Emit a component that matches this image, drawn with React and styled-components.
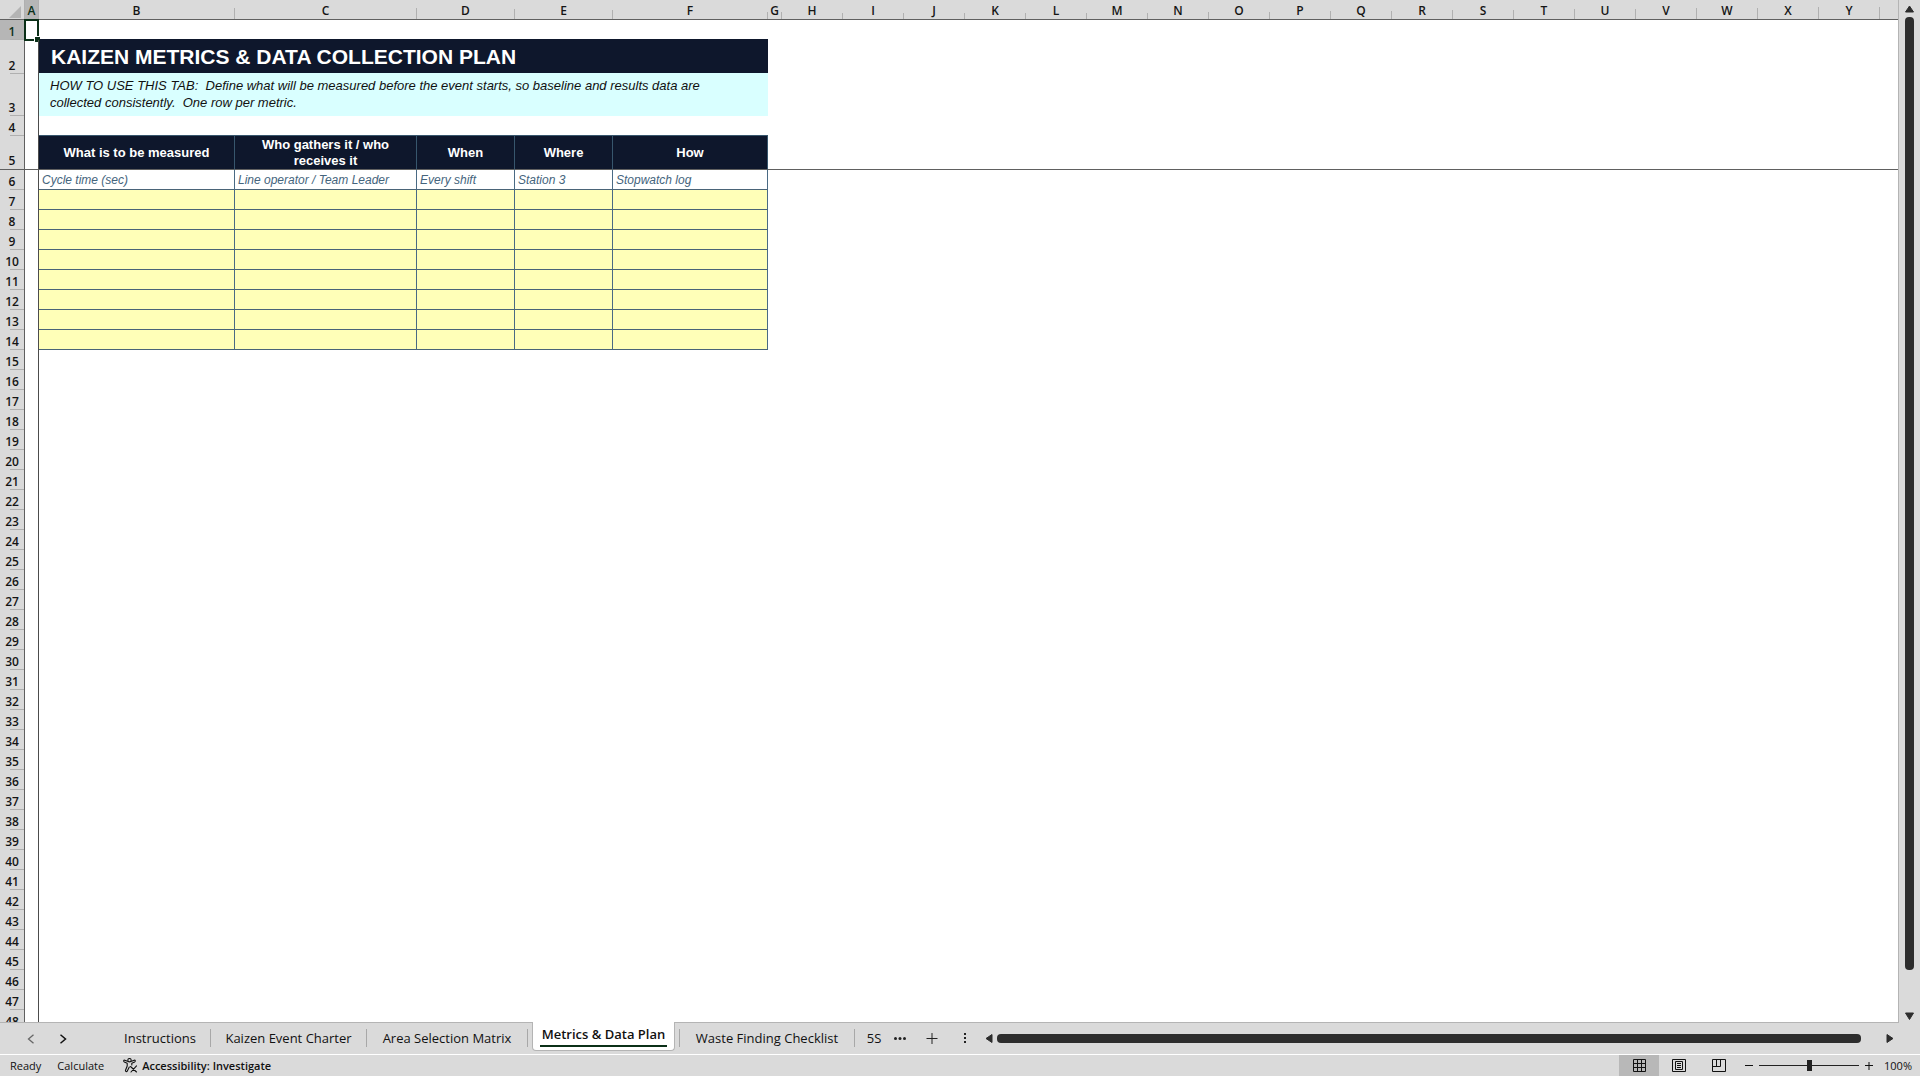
import { useState } from 'react'
import styled, { createGlobalStyle } from 'styled-components'

const GlobalStyle = createGlobalStyle`
    * {
        box-sizing: border-box;
    }

    body {
        margin: 0;
        background-color: #dadada;
        font-family: 'Open Sans', 'Noto Sans', sans-serif;
        color: #111;
    }

    button {
        font: inherit;
        color: inherit;
        background: none;
        border: none;
        padding: 0;
    }
`

const Page = styled.div`
    height: 100vh;
    display: flex;
    flex-direction: column;
    overflow: hidden;
`

const Workspace = styled.main`
    flex: 1;
    min-height: 0;
    display: flex;
`

const SheetArea = styled.div`
    flex: 1;
    min-width: 0;
    overflow: hidden;
    background-color: #fff;
    border-right: 1px solid #b4b4b4;
    border-bottom: 1px solid #b4b4b4;
`

const Sheet = styled.table`
    width: 100%;
    table-layout: fixed;
    border-collapse: separate;
    border-spacing: 0;
    font-family: 'Liberation Sans', Arial, sans-serif;
    font-size: 13px;
`

const Col = styled.col`
    width: ${(props) => props.$width}px;
`

const Row = styled.tr`
    height: ${(props) => props.$height}px;
`

const HeaderCell = styled.th`
    padding: 0;
    background-color: ${(props) => (props.$selected ? '#b6b6b6' : '#dadada')};
    color: ${(props) => (props.$selected ? '#0b3018' : '#151515')};
    font-family: 'Open Sans', 'Noto Sans', sans-serif;
    font-size: 12px;
    font-weight: 600;
    line-height: 17px;
    text-align: center;
    background-repeat: no-repeat;
    background-position: right bottom;
`

const ColumnHeader = styled(HeaderCell)`
    border-bottom: 1px solid #606060;
    padding: 2px 1px 0 0;
    background-image: linear-gradient(#b0b0b0, #b0b0b0);
    background-size: 1px ${(props) => props.$tick}px;
`

const RowHeader = styled(HeaderCell)`
    vertical-align: bottom;
    padding-top: 2px;
    border-right: 1px solid #606060;
    border-bottom: ${(props) => (props.$frozen ? '1px solid #606060' : 'none')};
    background-image: linear-gradient(#b0b0b0, #b0b0b0);
    background-size: 14px ${(props) => (props.$frozen ? 0 : 1)}px;
`

const Corner = styled(HeaderCell)`
    border-right: 1px solid #b0b0b0;
    border-bottom: 1px solid #606060;

    svg {
        display: block;
        margin: 4px 0 0 9px;
    }
`

const Cell = styled.td`
    padding: 0;
    border-bottom: ${(props) => (props.$frozen ? '1px solid #606060' : 'none')};
`

const FrozenCell = styled(Cell)`
    position: relative;
    border-right: 1px solid #4c4c4c;
`

const Selection = styled.span`
    position: absolute;
    top: -1px;
    left: -1px;
    right: -1px;
    bottom: -1px;
    border: 2px solid #0b3018;

    &::after {
        content: '';
        position: absolute;
        right: -3px;
        bottom: -3px;
        width: 5px;
        height: 5px;
        background-color: #0b3018;
        border-top: 1px solid #fff;
        border-left: 1px solid #fff;
    }
`

const Title = styled.td`
    padding: 0 12px;
    background-color: #0e172c;
    border-bottom: 1px solid #d9ffff;
    box-shadow: 0 -1px #0e172c;
    color: #fff;
    font-size: 21px;
    font-weight: bold;
    line-height: 24px;
`

const Note = styled.td`
    padding: 3px 11px;
    vertical-align: top;
    background-color: #d9ffff;
    font-size: 13px;
    font-style: italic;
    line-height: 17px;
`

const FieldHeader = styled.th`
    padding: 0 16px;
    background-color: #0e172c;
    border-right: 1px solid #37566d;
    border-bottom: 1px solid #606060;
    box-shadow: 0 -1px #37566d;
    color: #fff;
    font-size: 13px;
    font-weight: bold;
    line-height: 16px;
`

const Field = styled.td`
    padding: 0 3px;
    border-right: 1px solid #4a6a84;
    border-bottom: 1px solid #4a6478;
    background-color: ${(props) => (props.$filled ? '#fff' : '#ffffb8')};
    color: #44647c;
    font-size: 12px;
    font-style: italic;
    line-height: 18px;
    white-space: nowrap;
`

const VerticalBar = styled.div`
    width: 21px;
    padding: 5px 0 3px;
    display: flex;
    flex-direction: column;
    align-items: center;
`

const VerticalTrack = styled.div`
    flex: 1;
    width: 9px;
    margin: 4px 0 42px;
`

const VerticalThumb = styled.div`
    width: 9px;
    height: 100%;
    border-radius: 4px;
    background-color: #2d2d2d;
`

const ArrowButton = styled.button`
    display: flex;
    align-items: center;
    justify-content: center;

    svg {
        display: block;
    }
`

const TabBar = styled.nav`
    height: 32px;
    display: flex;
    border-bottom: 1px solid #fff;
    font-size: 13px;
`

const TabArrows = styled.div`
    width: 110px;
    padding-left: 24px;
    display: flex;
    align-items: center;
    gap: 18px;
`

const NavButton = styled.button`
    width: 14px;
    height: 20px;
    color: ${(props) => (props.disabled ? '#666' : '#111')};
    display: flex;
    align-items: center;
    justify-content: center;
`

const Tab = styled.button`
    width: ${(props) => props.$width}px;
    height: 18px;
    margin-top: 6px;
    white-space: nowrap;
    line-height: 18px;
    border-right: ${(props) => (props.$last ? 'none' : '1px solid #a8a8a8')};
`

const ActiveTab = styled.button`
    height: 29px;
    margin: -1px 4px 0;
    padding: 0 7px 3px;
    width: 143px;
    background-color: #fff;
    border: 1px solid #b4b4b4;
    border-top: none;
    border-radius: 0 0 4px 4px;
    font-weight: 600;
    white-space: nowrap;

    span {
        display: block;
        height: 25px;
        line-height: 24px;
        border-bottom: 2px solid #0b3018;
    }
`

const Divider = styled.span`
    width: 1px;
    height: 18px;
    margin-top: 6px;
    background-color: #a8a8a8;
`

const TabTool = styled.button`
    width: ${(props) => props.$width}px;
    height: 30px;
    display: flex;
    align-items: center;
    justify-content: center;
`

const HorizontalBar = styled.div`
    flex: 1;
    height: 30px;
    padding: 0 26px 0 12px;
    display: flex;
    align-items: center;
`

const HorizontalTrack = styled.div`
    flex: 1;
    margin: 0 25px 0 4px;
`

const HorizontalThumb = styled.div`
    height: 9px;
    border-radius: 4px;
    background-color: #2d2d2d;
`

const StatusBar = styled.footer`
    height: 21px;
    padding: 0 8px 0 10px;
    display: flex;
    align-items: center;
    font-size: 11px;
    white-space: nowrap;
`

const StatusText = styled.span`
    margin-right: 16px;
`

const Accessibility = styled.button`
    display: flex;
    align-items: center;
    gap: 4px;
    margin-left: 3px;
    margin-right: auto;
    font-weight: 600;
`

const ViewButton = styled.button`
    width: 40px;
    height: 21px;
    display: flex;
    align-items: center;
    justify-content: center;
    background-color: ${(props) => (props.$active ? '#b8b8b8' : 'transparent')};
`

const ZoomButton = styled.button`
    width: 20px;
    height: 20px;
    display: flex;
    align-items: center;
    justify-content: center;
`

const ZoomSlider = styled.input`
    appearance: none;
    width: 100px;
    height: 12px;
    margin: 0;
    background: linear-gradient(#222, #222) center / 100% 1px no-repeat;

    &::-webkit-slider-thumb {
        appearance: none;
        width: 5px;
        height: 11px;
        background-color: #222;
    }
`

const ZoomLevel = styled.output`
    width: 33px;
    text-align: right;
`

const columns = [
    { name: 'A', width: 14, tick: 19 },
    { name: 'B', width: 196, tick: 11 },
    { name: 'C', width: 182, tick: 11 },
    { name: 'D', width: 98, tick: 10 },
    { name: 'E', width: 98, tick: 9 },
    { name: 'F', width: 155, tick: 7 },
    { name: 'G', width: 14, tick: 7 },
    ...'HIJKLMNOPQRSTUVWXY'.split('').map((name, i) => ({
        name,
        width: 61,
        tick: i < 5 ? 6 : Math.min(12, 6 + Math.floor((i - 4) / 2)),
    })),
]

const fields = ['What is to be measured', 'Who gathers it / who receives it', 'When', 'Where', 'How']
const sample = ['Cycle time (sec)', 'Line operator / Team Leader', 'Every shift', 'Station 3', 'Stopwatch log']
const emptyRows = Array.from({ length: 8 }, (_, i) => i + 7)
const plainRows = Array.from({ length: 34 }, (_, i) => i + 15)

const Arrow = ({ direction }) => {
    const shapes = {
        up: 'M4.5 1 L8.5 7 H0.5 Z',
        down: 'M0.5 1 H8.5 L4.5 7.5 Z',
        left: 'M7 0.5 V8.5 L1 4.5 Z',
        right: 'M1 0.5 V8.5 L7 4.5 Z',
    }
    const vertical = direction === 'up' || direction === 'down'

    return (
        <svg width={vertical ? 9 : 8} height={vertical ? 8 : 9}>
            <path d={shapes[direction]} fill="#2d2d2d" stroke="#2d2d2d" strokeLinejoin="round" />
        </svg>
    )
}

const SheetRow = ({ number, height = 20, selected, frozen, children }) => (
    <Row $height={height}>
        <RowHeader scope="row" $selected={selected} $frozen={frozen}>{number}</RowHeader>
        <FrozenCell $frozen={frozen}>{selected && <Selection />}</FrozenCell>
        {children}
    </Row>
)

const Grid = () => (
    <Sheet>
        <colgroup>
            <Col $width={25} />
            {columns.map((column) => (
                <Col key={column.name} $width={column.width} />
            ))}
            <col />
        </colgroup>
        <thead>
            <Row $height={20}>
                <Corner>
                    <svg width="12" height="12">
                        <path d="M12 0 V12 H0 Z" fill="#b4b4b4" />
                    </svg>
                </Corner>
                {columns.map((column) => (
                    <ColumnHeader key={column.name} scope="col" $tick={column.tick} $selected={column.name === 'A'}>
                        {column.name}
                    </ColumnHeader>
                ))}
                <ColumnHeader $tick={0} />
            </Row>
        </thead>
        <tbody>
            <SheetRow number={1} selected>
                <Cell colSpan={25} />
            </SheetRow>
            <SheetRow number={2} height={34}>
                <Title colSpan={5}>KAIZEN METRICS &amp; DATA COLLECTION PLAN</Title>
                <Cell colSpan={20} />
            </SheetRow>
            <SheetRow number={3} height={42}>
                <Note colSpan={5}>
                    HOW TO USE THIS TAB:&nbsp; Define what will be measured before the event starts, so baseline and results data are
                    <br />
                    collected consistently.&nbsp; One row per metric.
                </Note>
                <Cell colSpan={20} />
            </SheetRow>
            <SheetRow number={4}>
                <Cell colSpan={25} />
            </SheetRow>
            <SheetRow number={5} height={34} frozen>
                {fields.map((field) => (
                    <FieldHeader key={field} scope="col">{field}</FieldHeader>
                ))}
                <Cell colSpan={20} $frozen />
            </SheetRow>
            <SheetRow number={6}>
                {sample.map((value) => (
                    <Field key={value} $filled>{value}</Field>
                ))}
                <Cell colSpan={20} />
            </SheetRow>
            {emptyRows.map((number) => (
                <SheetRow key={number} number={number}>
                    {fields.map((field) => (
                        <Field key={field} />
                    ))}
                    <Cell colSpan={20} />
                </SheetRow>
            ))}
            {plainRows.map((number) => (
                <SheetRow key={number} number={number}>
                    <Cell colSpan={25} />
                </SheetRow>
            ))}
        </tbody>
    </Sheet>
)

const Tabs = () => (
    <TabBar>
        <TabArrows>
            <NavButton disabled aria-label="Previous sheet">
                <svg width="8" height="10" fill="none" stroke="currentColor" strokeWidth="1.3">
                    <path d="M6.5 0.8 L1.5 5 L6.5 9.2" />
                </svg>
            </NavButton>
            <NavButton aria-label="Next sheet">
                <svg width="8" height="10" fill="none" stroke="currentColor" strokeWidth="1.5">
                    <path d="M1.5 0.8 L6.5 5 L1.5 9.2" />
                </svg>
            </NavButton>
        </TabArrows>
        <Tab $width={101}>Instructions</Tab>
        <Tab $width={156}>Kaizen Event Charter</Tab>
        <Tab $width={161}>Area Selection Matrix</Tab>
        <ActiveTab aria-current="page"><span>Metrics &amp; Data Plan</span></ActiveTab>
        <Divider />
        <Tab $width={175}>Waste Finding Checklist</Tab>
        <Tab $width={38} $last>5S</Tab>
        <TabTool $width={14} aria-label="More sheets">
            <svg width="12" height="3" fill="#222">
                <circle cx="1.5" cy="1.5" r="1.5" />
                <circle cx="6" cy="1.5" r="1.5" />
                <circle cx="10.5" cy="1.5" r="1.5" />
            </svg>
        </TabTool>
        <TabTool $width={50} aria-label="New sheet">
            <svg width="12" height="12" stroke="#222">
                <path d="M0.5 6.5 H11.5 M6 1 V12" />
            </svg>
        </TabTool>
        <TabTool $width={16} aria-label="Resize tabs">
            <svg width="3" height="11" fill="#222">
                <path d="M0 0 h2 v2 h-2 Z M0 4 h2 v2 h-2 Z M0 8 h2 v2 h-2 Z" />
            </svg>
        </TabTool>
        <HorizontalBar>
            <ArrowButton aria-label="Scroll left"><Arrow direction="left" /></ArrowButton>
            <HorizontalTrack>
                <HorizontalThumb />
            </HorizontalTrack>
            <ArrowButton aria-label="Scroll right"><Arrow direction="right" /></ArrowButton>
        </HorizontalBar>
    </TabBar>
)

const Status = () => {
    const [zoom, setZoom] = useState(100)

    return (
        <StatusBar>
            <StatusText>Ready</StatusText>
            <StatusText>Calculate</StatusText>
            <Accessibility>
                <svg width="15" height="15" fill="none" stroke="#111" strokeWidth="1.1" strokeLinecap="round" strokeLinejoin="round">
                    <circle cx="6.5" cy="2.2" r="1.7" />
                    <path d="M4.5 3.3 L1.8 2.2 C0.6 1.9 0.3 3.4 1.3 3.9 L4.2 5.2 V8 L2.5 12.3 C2.2 13.7 3.8 14.1 4.3 13 L6.3 9" />
                    <path d="M8.5 3.3 L11.2 2.2 C12.4 1.9 12.7 3.4 11.7 3.9 L8.8 5.2 V7" />
                    <path d="M7.5 8.5 L13.5 14 M13.5 7.8 L8 14" />
                </svg>
                Accessibility: Investigate
            </Accessibility>
            <ViewButton $active aria-label="Normal view">
                <svg width="13" height="13" fill="none" stroke="#111">
                    <path d="M0.5 0.5 H12.5 V12.5 H0.5 Z M4.5 0.5 V12.5 M8.5 0.5 V12.5 M0.5 4.5 H12.5 M0.5 8.5 H12.5" />
                </svg>
            </ViewButton>
            <ViewButton aria-label="Page layout view">
                <svg width="14" height="13" fill="none" stroke="#111">
                    <path d="M0.5 0.5 H13.5 V12.5 H0.5 Z M3.5 2.5 H10.5 V10.5 H3.5 Z M5 4.5 H9 M5 6.5 H9 M5 8.5 H9" />
                </svg>
            </ViewButton>
            <ViewButton aria-label="Page break preview">
                <svg width="14" height="13" fill="none" stroke="#111">
                    <path d="M0.5 0.5 H13.5 V12.5 H0.5 Z M4.5 0.5 V7.5 M8.5 0.5 V7.5 M0.5 7.5 H8.5" />
                </svg>
            </ViewButton>
            <ZoomButton aria-label="Zoom out">
                <svg width="8" height="8" stroke="#111"><path d="M0 3.5 H8" /></svg>
            </ZoomButton>
            <ZoomSlider
                type="range"
                min="0"
                max="200"
                value={zoom}
                onChange={(e) => setZoom(Number(e.target.value))}
                aria-label="Zoom"
            />
            <ZoomButton aria-label="Zoom in">
                <svg width="8" height="8" stroke="#111"><path d="M0 3.5 H8 M4 0 V8" /></svg>
            </ZoomButton>
            <ZoomLevel>{zoom}%</ZoomLevel>
        </StatusBar>
    )
}

const App = () => (
    <Page>
        <GlobalStyle />
        <Workspace>
            <SheetArea>
                <Grid />
            </SheetArea>
            <VerticalBar>
                <ArrowButton aria-label="Scroll up"><Arrow direction="up" /></ArrowButton>
                <VerticalTrack>
                    <VerticalThumb />
                </VerticalTrack>
                <ArrowButton aria-label="Scroll down"><Arrow direction="down" /></ArrowButton>
            </VerticalBar>
        </Workspace>
        <Tabs />
        <Status />
    </Page>
)

export default App
